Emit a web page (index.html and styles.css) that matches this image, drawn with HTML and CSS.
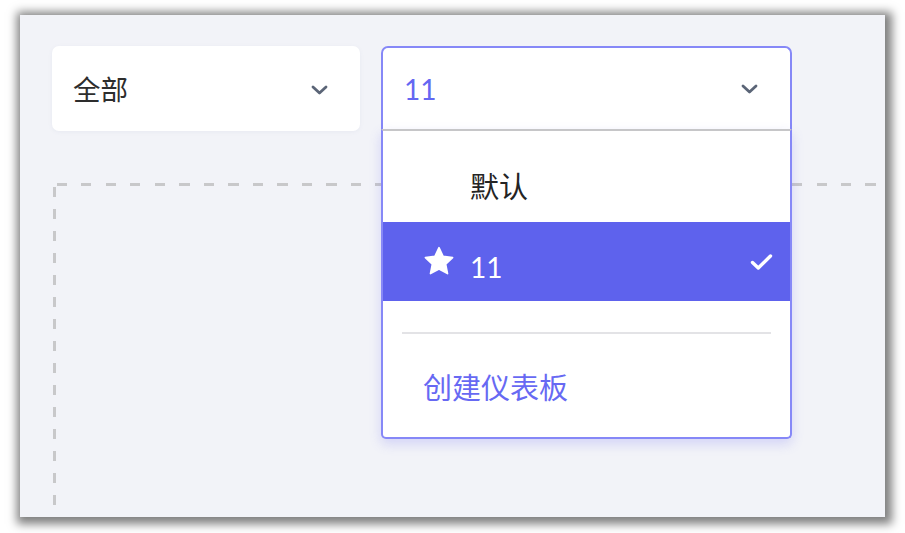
FILE: index.html
```html
<!DOCTYPE html>
<html lang="zh">
<head>
<meta charset="utf-8">
<title>仪表板</title>
<link rel="stylesheet" href="styles.css">
</head>
<body>
<div class="window">
  <div class="toolbar">
    <div class="select select-plain">
      <span class="select-label">全部</span>
      <svg class="chevron" width="17" height="10" viewBox="0 0 17 10"><polyline points="2,2 8.5,8 15,2" fill="none" stroke="currentColor" stroke-width="2.8" stroke-linecap="round" stroke-linejoin="round"/></svg>
    </div>
    <div class="select-wrap">
      <div class="select select-open">
        <span class="select-label accent">11</span>
        <svg class="chevron" width="17" height="10" viewBox="0 0 17 10"><polyline points="2,2 8.5,8 15,2" fill="none" stroke="currentColor" stroke-width="2.8" stroke-linecap="round" stroke-linejoin="round"/></svg>
      </div>
      <div class="menu">
        <div class="menu-item item-default">
          <span class="item-icon"></span>
          <span class="item-text">默认</span>
        </div>
        <div class="menu-item item-active">
          <span class="item-icon">
            <svg width="32" height="30" viewBox="0 0 24 22.5"><path d="M12 1.2l3.1 6.6 7.1.9-5.2 4.9 1.4 7.1L12 17.2l-6.4 3.5 1.4-7.1-5.2-4.9 7.1-.9z" fill="#fff" stroke="#fff" stroke-width="1.2" stroke-linejoin="round"/></svg>
          </span>
          <span class="item-text">11</span>
          <svg class="check" width="23" height="18" viewBox="0 0 23 18"><polyline points="2.5,9.5 8.3,15 20.5,3" fill="none" stroke="#fff" stroke-width="3.4" stroke-linecap="round" stroke-linejoin="round"/></svg>
        </div>
        <div class="menu-divider"></div>
        <div class="menu-create">创建仪表板</div>
      </div>
    </div>
  </div>
  <div class="canvas"></div>
</div>
</body>
</html>
```
FILE: styles.css
```css
* { box-sizing: border-box; }

html, body {
  margin: 0;
  padding: 0;
  background: #ffffff;
}

body {
  font-family: Lato, "Noto Sans CJK SC", sans-serif;
  color: #2b2b2b;
  height: 533px;
}

.window {
  position: relative;
  margin: 15px 0 0 20px;
  width: 865px;
  height: 502px;
  background: #f2f3f8;
  overflow: hidden;
  box-shadow: 2px 2px 9px 5px rgba(0, 0, 0, 0.5);
}

.toolbar {
  display: flex;
  align-items: flex-start;
  gap: 21px;
  padding: 31px 0 0 32px;
}

.select {
  display: flex;
  align-items: center;
  justify-content: space-between;
  background: #ffffff;
  border-radius: 7px;
  font-size: 27.5px;
  line-height: 40px;
}

.select-plain {
  width: 308px;
  height: 85px;
  padding: 2px 32px 0 21px;
  box-shadow: 0 1px 4px rgba(120, 125, 160, 0.08);
}

.select-wrap {
  position: relative;
  width: 411px;
}

.select-open {
  width: 411px;
  height: 84px;
  padding: 0 32px 0 21px;
  border: 2px solid #8688f7;
  border-bottom: none;
  border-radius: 7px 7px 0 0;
}

.select-label {
  color: #2d2d2d;
}

.select-label.accent {
  color: #6467f2;
  font-size: 28px;
}

.chevron {
  color: #5b6577;
  display: block;
}

.menu {
  position: absolute;
  top: 83px;
  left: 0;
  width: 411px;
  height: 310px;
  background: #ffffff;
  border: 2px solid #8688f7;
  border-top: 2px solid #c6c6c8;
  border-radius: 0 0 5px 5px;
  box-shadow: 0 5px 12px rgba(99, 102, 241, 0.22);
  z-index: 5;
}

.menu-item {
  display: flex;
  align-items: center;
  font-size: 29px;
  line-height: 40px;
}

.item-icon {
  width: 47px;
  height: 30px;
  margin-left: 40px;
  display: flex;
  align-items: center;
}

.item-default {
  height: 91px;
  padding-top: 20px;
  color: #242424;
}

.item-active {
  height: 79px;
  background: #5e62ed;
  color: #ffffff;
  padding-top: 2px;
}

.item-active .item-text {
  font-size: 28px;
  margin-top: 8px;
}

.item-active .item-icon {
  margin-top: -4px;
}

.check {
  margin-left: auto;
  margin-right: 17px;
  margin-top: -2px;
  display: block;
}

.menu-divider {
  height: 2px;
  margin: 31px 19px 0 19px;
  background: #e3e3e6;
}

.menu-create {
  padding: 34px 0 0 40px;
  font-size: 29px;
  line-height: 40px;
  color: #6769f3;
}

.canvas {
  margin: 52px 0 0 33px;
  height: 600px;
  width: 1000px;
  background-image:
    repeating-linear-gradient(to right, #c8c8ca 0 10px, transparent 10px 24.5px),
    repeating-linear-gradient(to bottom, #c8c8ca 0 10px, transparent 10px 22px);
  background-size: 100% 3px, 3px 100%;
  background-position: 4px 0, 0 4px;
  background-repeat: no-repeat;
}
```
